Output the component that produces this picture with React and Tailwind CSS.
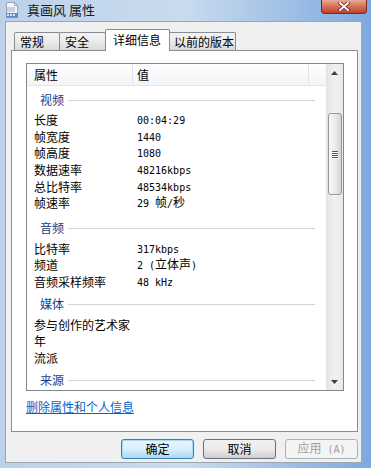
import React from 'react';

const video = [
  ['长度', '00:04:29'],
  ['帧宽度', '1440'],
  ['帧高度', '1080'],
  ['数据速率', '48216kbps'],
  ['总比特率', '48534kbps'],
  ['帧速率', '29 帧/秒'],
];

const audio = [
  ['比特率', '317kbps'],
  ['频道', '2 (立体声)'],
  ['音频采样频率', '48 kHz'],
];

const media = [['参与创作的艺术家', ''], ['年', ''], ['流派', '']];

// split ascii (mono, like the bitmap font) from CJK chars
const Val = ({ text }) => {
  const parts = [];
  let buf = '';
  let mono = null;
  for (const ch of text) {
    const m = ch.charCodeAt(0) < 128;
    if (mono !== null && m !== mono) {
      parts.push([buf, mono]);
      buf = '';
    }
    buf += ch;
    mono = m;
  }
  if (buf) parts.push([buf, mono]);
  return parts.map(([t, m], i) => (
    <span
      key={i}
      className={m ? "font-['DejaVu_Sans_Mono',monospace] text-[10px] whitespace-pre" : 'text-[12px]'}
    >
      {t}
    </span>
  ));
};

const Row = ({ name, value }) => (
  <div className="flex items-center h-[16.6px] leading-[16px] text-[12px] text-black">
    <div className="w-[110px] pl-[7px] shrink-0 whitespace-nowrap">{name}</div>
    <div className="whitespace-nowrap">{value && <Val text={value} />}</div>
  </div>
);

const Group = ({ title, tall }) => (
  <div className={`flex items-center ${tall ? 'h-[29px] pt-[4px]' : 'h-[26px] pt-[2px]'}`}>
    <span className="pl-[13px] text-[12px] leading-[16px] text-[#1e3b86]">{title}</span>
    <div className="flex-1 ml-[4px] mr-[11px] h-px bg-[#cfd5dd]" />
  </div>
);

const Tab = ({ label, w, active }) =>
  active ? (
    <div
      className={`${w} h-[22px] -mb-px relative z-10 bg-white border border-b-0 border-[#898c95] rounded-t-[2px] pl-[7px] pt-[1px] text-[12px] leading-[18px] whitespace-nowrap -mx-[1px]`}
    >
      {label}
    </div>
  ) : (
    <div
      className={`${w} h-[18px] bg-gradient-to-b from-[#f3f3f3] via-[#ebebeb] to-[#d9d9d9] border border-b-0 border-[#898c95] -ml-px first:ml-0 rounded-t-[2px] pl-[5px] text-[12px] leading-[18px] whitespace-nowrap overflow-hidden`}
    >
      {label}
    </div>
  );

const Btn = ({ label, primary, disabled }) => (
  <div
    className={`w-[73px] h-[20px] rounded-[3px] border flex items-center justify-center text-[12px] leading-[16px] ${
      primary
        ? 'border-[#3c7fb1] bg-gradient-to-b from-[#eaf6fd] via-[#d9f0fc] to-[#a7d9f5] shadow-[inset_0_0_0_1px_#a6dcf8]'
        : disabled
        ? 'border-[#adb2b5] bg-[#f4f4f4] text-[#a0a0a0]'
        : 'border-[#707070] bg-gradient-to-b from-[#f2f2f2] via-[#ebebeb] to-[#cfcfcf]'
    }`}
  >
    {disabled ? (
      <span>
        应用<span className="font-['DejaVu_Sans_Mono',monospace] text-[10px]"> (A)</span>
      </span>
    ) : (
      label
    )}
  </div>
);

const Grip = () => (
  <div className="flex flex-col items-center gap-[1px]">
    {[0, 1, 2, 3].map((i) => (
      <div key={i} className="w-[6px] h-px bg-[#555] shadow-[0_1px_0_#fff]" />
    ))}
  </div>
);

export default function App() {
  return (
    <div className="w-[371px] h-[468px] overflow-hidden bg-gradient-to-r from-[#bcd2ea] via-[#c9dbee] to-[#7ea9dd] font-['Noto_Sans_CJK_SC',sans-serif] text-black">
      {/* title bar */}
      <div className="h-[21px] flex items-start">
        <div className="ml-[5px] mt-[2px] w-[14px] h-[16px] relative">
          <svg width="14" height="16" viewBox="0 0 14 16">
            <path d="M1.5 0.5h8l3 3v12h-11z" fill="#f4f6f9" stroke="#9aa4b2" />
            <path d="M9.5 0.5v3h3" fill="none" stroke="#9aa4b2" />
            <rect x="2" y="5" width="8" height="5" fill="#c9d3df" />
            <rect x="1" y="11" width="12" height="4.5" fill="#5b8cc9" />
            <rect x="2" y="12" width="2" height="2" fill="#dbe8f7" />
            <rect x="5" y="12" width="2" height="2" fill="#dbe8f7" />
            <rect x="8" y="12" width="2" height="2" fill="#dbe8f7" />
          </svg>
        </div>
        <div className="ml-[8px] mt-[2px] text-[13px] leading-[16px] text-[#1a1a1a] whitespace-pre">真画风 属性</div>
        <div className="ml-auto mr-[4px] w-[46px] h-[14px] rounded-b-[4px] border border-t-0 border-[#7a2a1c] bg-gradient-to-b from-[#e9a99a] via-[#d46f57] to-[#c0422b] flex items-center justify-center">
          <svg width="12" height="9" viewBox="0 0 12 9">
            <path d="M2 1l8 7M10 1l-8 7" stroke="#5a1a10" strokeWidth="3.4" strokeLinecap="round" />
            <path d="M2 1l8 7M10 1l-8 7" stroke="#fff" strokeWidth="2" strokeLinecap="round" />
          </svg>
        </div>
      </div>

      {/* body */}
      <div className="flex">
        <div className="ml-[5px] w-[357px] h-[442px] bg-[#f0f0f0] border border-[#9aa6b4] pt-[7px] pl-[5px]">
          {/* tabs */}
          <div className="flex items-end h-[21px] pl-[3px]">
            <Tab label="常规" w="w-[46px]" />
            <Tab label="安全" w="w-[47px]" />
            <Tab label="详细信息" w="w-[65px]" active />
            <Tab label="以前的版本" w="w-[68px]" />
          </div>

          {/* tab panel */}
          <div className="w-[347px] h-[382px] bg-white border border-[#898c95] pt-[12px] pl-[14px]">
            {/* list view */}
            <div className="w-[318px] h-[328px] border border-[#828790] flex overflow-hidden">
              <div className="flex-1 flex flex-col">
                <div className="h-[22px] flex shrink-0 bg-gradient-to-b from-white to-[#f2f4f7] border-b border-[#e3e6ea] text-[12px] leading-[16px]">
                  <div className="w-[106px] pl-[7px] flex items-center border-r border-[#e1e4e8]">属性</div>
                  <div className="w-[176px] pl-[4px] flex items-center border-r border-[#e1e4e8]">值</div>
                  <div className="flex-1" />
                </div>
                <div className="flex-1 overflow-hidden">
                  <Group title="视频" />
                  {video.map(([n, v]) => (
                    <Row key={n} name={n} value={v} />
                  ))}
                  <Group title="音频" tall />
                  {audio.map(([n, v]) => (
                    <Row key={n} name={n} value={v} />
                  ))}
                  <Group title="媒体" />
                  {media.map(([n, v]) => (
                    <Row key={n} name={n} value={v} />
                  ))}
                  <Group title="来源" />
                </div>
              </div>

              {/* scrollbar */}
              <div className="w-[17px] h-full bg-gradient-to-r from-[#e3e3e3] via-[#f1f1f1] to-[#e9e9e9] flex flex-col items-center">
                <div className="h-[17px] w-full flex items-center justify-center">
                  <svg width="7" height="4" viewBox="0 0 7 4">
                    <path d="M3.5 0L7 4H0z" fill="#3e3e3e" />
                  </svg>
                </div>
                <div className="mt-[32px] w-[14px] h-[82px] rounded-[3px] border border-[#979797] bg-gradient-to-r from-[#f7f7f7] via-[#ececec] to-[#d4d4d4] flex items-center justify-center">
                  <Grip />
                </div>
                <div className="flex-1" />
                <div className="h-[17px] w-full flex items-center justify-center">
                  <svg width="7" height="4" viewBox="0 0 7 4">
                    <path d="M0 0h7L3.5 4z" fill="#3e3e3e" />
                  </svg>
                </div>
              </div>
            </div>

            <div className="mt-[8px] text-[12px] leading-[16px] text-[#0066cc] underline">删除属性和个人信息</div>
          </div>

          {/* buttons */}
          <div className="mt-[7px] w-[347px] flex justify-end gap-[9px]">
            <Btn label="确定" primary />
            <Btn label="取消" />
            <Btn label="应用(A)" disabled />
          </div>
        </div>
      </div>
    </div>
  );
}
